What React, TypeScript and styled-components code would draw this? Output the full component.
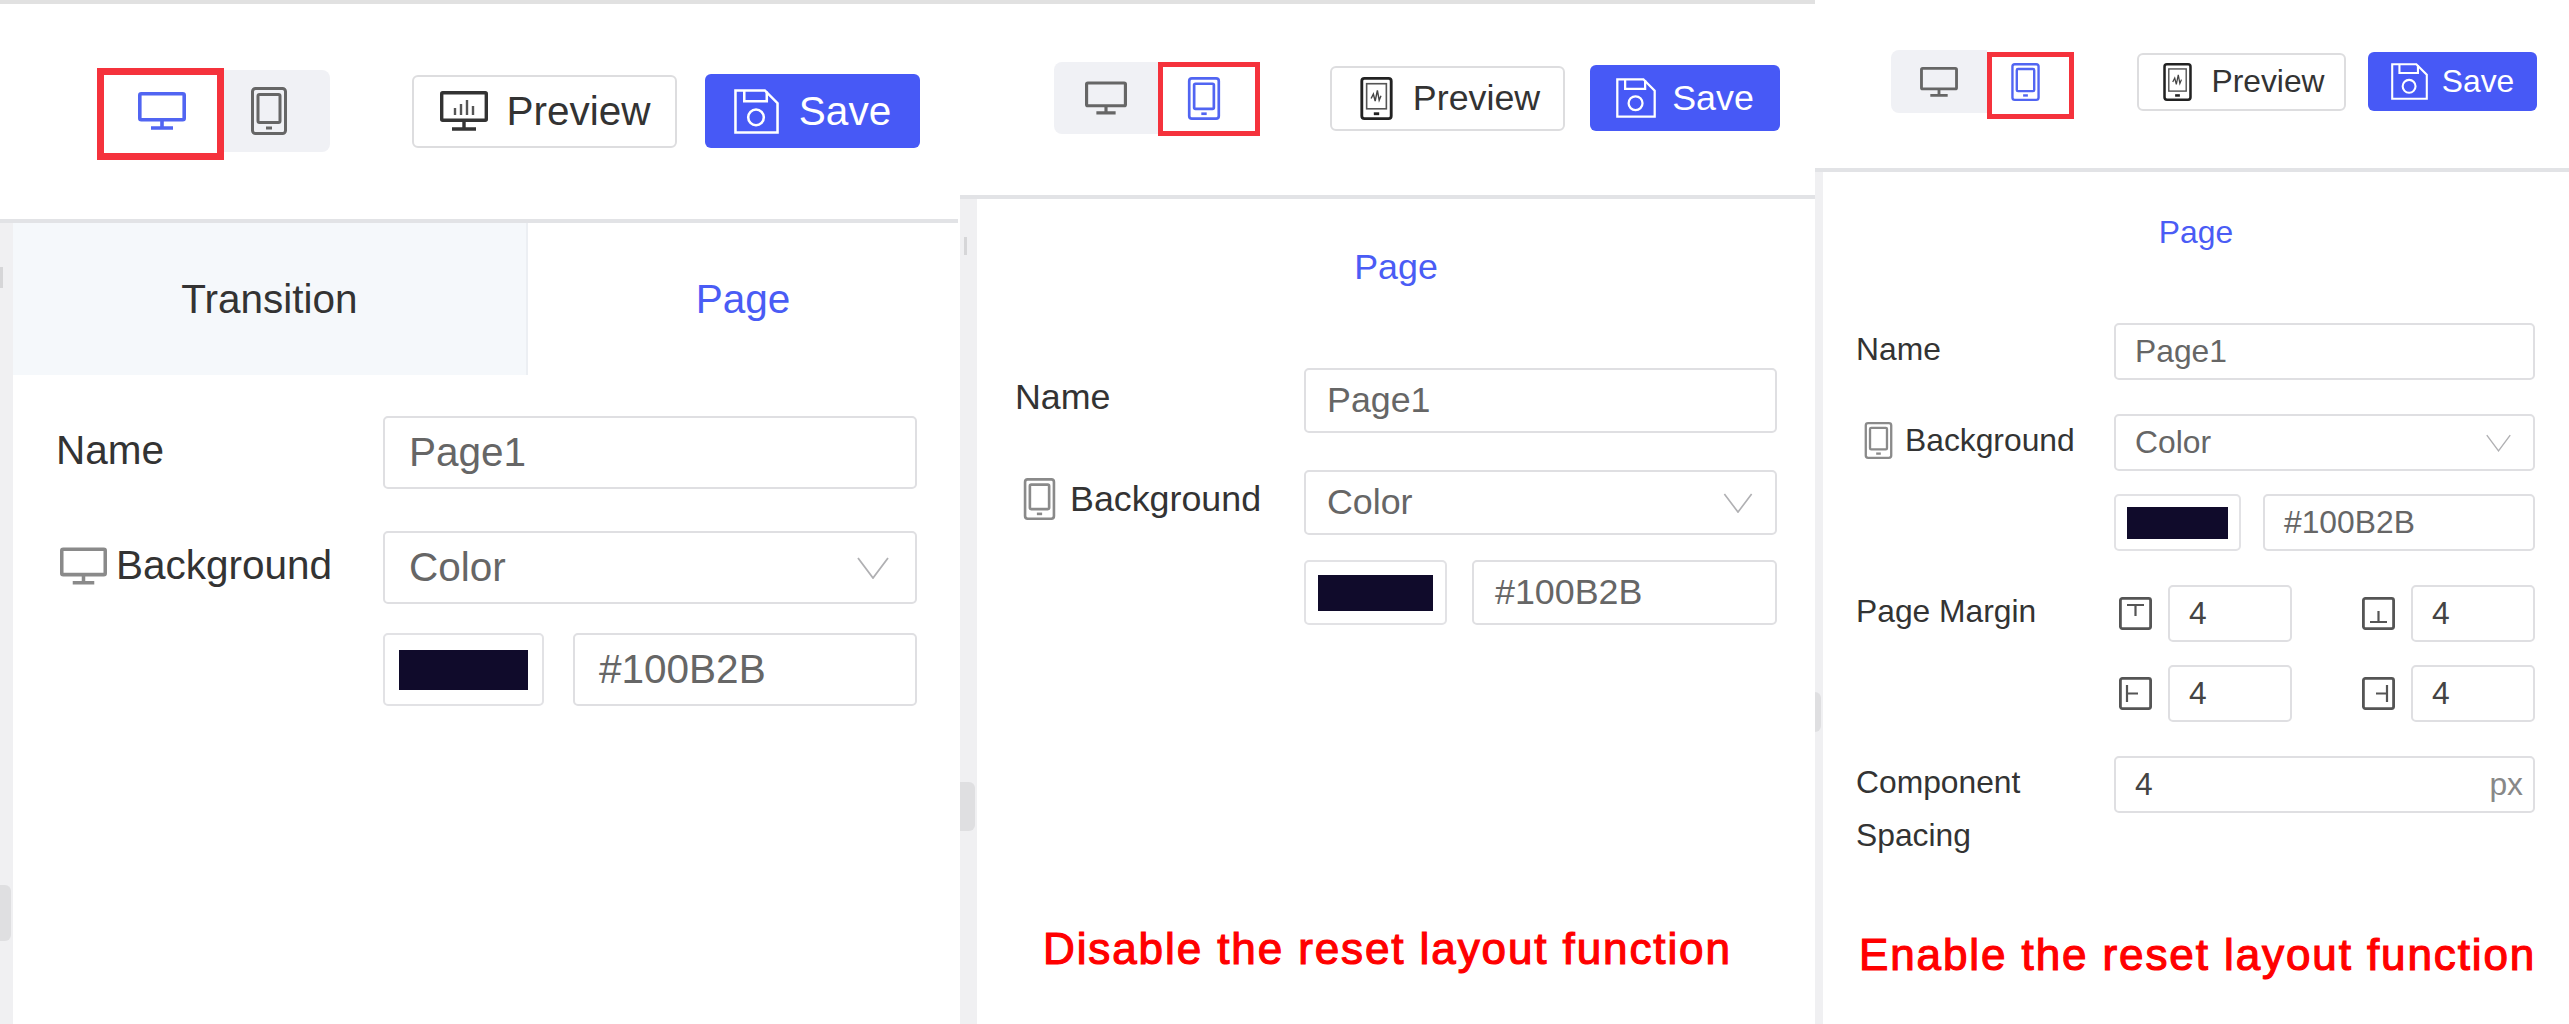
import React from 'react';
import styled, { createGlobalStyle } from 'styled-components';

const BLUE = '#4a5cf5';
const LINE = '#e2e3e6';
const RAIL = '#f0f0f2';

const GlobalStyle = createGlobalStyle`
	html, body {
		margin: 0;
		background: #fff;
		font-family: "Liberation Sans", Arial, sans-serif;
	}
`;

type Metrics = {
	width: number;
	shift: number;
	fs: number;
	toolbarH: number;
	toolbarTop: number;
	toolbarLeft: number;
	topLine: number;
	groupH: number;
	deskW: number;
	phoneW: number;
	phonePad: number;
	deskIcon: [number, number];
	phoneIcon: [number, number];
	groupGap: number;
	previewW: number;
	previewH: number;
	previewPad: number;
	previewIcon: [number, number];
	previewGap: number;
	actionGap: number;
	saveW: number;
	saveIcon: [number, number];
	saveGap: number;
	redInset: string;
	redBorder: number;
	railW: number;
	thumbTop: number;
	thumbH: number;
	grip?: { top: number; left: number; height: number };
	tabH: number;
	bodyTop: number;
	bodyLeft: number;
	bodyRight: number;
	labelW: number;
	labelLh: number;
	ctlH: number;
	rowGap: number;
	subGap: number;
	ctlPad: number;
	swatchW: number;
	swatchGap: number;
	chip: [number, number];
	chevron: [number, number];
	chevronRight: number;
	labelIcon: [number, number];
	labelIconLeft: number;
	labelIconGap: number;
};

const Shot = styled.div`
	display: flex;
	width: 2569px;
	height: 1024px;
	overflow: hidden;
	background: #fff;
`;

const Panel = styled.section<{ $m: Metrics }>`
	flex: none;
	display: flex;
	flex-direction: column;
	width: ${p => p.$m.width}px;
	height: 1024px;
	font-size: ${p => p.$m.fs}px;
	color: #333;
`;

const Toolbar = styled.header<{ $m: Metrics }>`
	flex: none;
	box-sizing: border-box;
	display: flex;
	height: ${p => p.$m.toolbarH}px;
	padding: ${p => p.$m.toolbarTop}px 0 0 ${p => p.$m.toolbarLeft}px;
	border-top: ${p => p.$m.topLine}px solid #e1e1e1;
`;

const ToolbarRow = styled.div<{ $m: Metrics }>`
	display: flex;
	align-items: center;
	height: ${p => p.$m.groupH}px;
`;

const ViewGroup = styled.div<{ $m: Metrics }>`
	display: flex;
	height: ${p => p.$m.groupH}px;
	margin-right: ${p => p.$m.groupGap}px;
	background: #f0f1f5;
	border-radius: 8px;
`;

const ViewItem = styled.div<{ $width: number; $active?: boolean; $padRight?: number }>`
	position: relative;
	box-sizing: border-box;
	display: flex;
	align-items: center;
	justify-content: center;
	width: ${p => p.$width}px;
	padding-right: ${p => p.$padRight ?? 0}px;
	background: ${p => (p.$active ? '#fff' : 'transparent')};
	color: ${p => (p.$active ? '#5165f2' : '#666')};
`;

const RedFrame = styled.span<{ $inset: string; $border: number }>`
	position: absolute;
	inset: ${p => p.$inset};
	border: ${p => p.$border}px solid #f5323c;
	pointer-events: none;
`;

const Preview = styled.button<{ $m: Metrics }>`
	box-sizing: border-box;
	display: flex;
	align-items: center;
	justify-content: center;
	gap: ${p => p.$m.previewGap}px;
	width: ${p => p.$m.previewW}px;
	height: ${p => p.$m.previewH}px;
	margin-right: ${p => p.$m.actionGap}px;
	padding: 0 0 0 ${p => p.$m.previewPad}px;
	background: #fff;
	border: 2px solid #dddddf;
	border-radius: 6px;
	font: inherit;
	color: #333;
`;

const Save = styled.button<{ $m: Metrics }>`
	box-sizing: border-box;
	display: flex;
	align-items: center;
	justify-content: center;
	gap: ${p => p.$m.saveGap}px;
	width: ${p => p.$m.saveW}px;
	height: ${p => p.$m.previewH + 1}px;
	padding: 0;
	background: #4759f6;
	border: 0;
	border-radius: 6px;
	font: inherit;
	color: #fff;
`;

const Workspace = styled.div<{ $m: Metrics }>`
	flex: 1;
	display: flex;
	min-height: 0;
	margin-left: ${p => p.$m.shift}px;
	border-top: 4px solid ${LINE};
`;

const Rail = styled.div<{ $m: Metrics }>`
	position: relative;
	flex: none;
	width: ${p => p.$m.railW}px;
	background: ${RAIL};
`;

const Thumb = styled.span<{ $top: number; $height: number }>`
	position: absolute;
	top: ${p => p.$top}px;
	left: 0;
	right: 2px;
	height: ${p => p.$height}px;
	background: #dfdfe1;
	border-radius: 0 6px 6px 0;
`;

const Grip = styled.span<{ $top: number; $left: number; $height: number }>`
	position: absolute;
	top: ${p => p.$top}px;
	left: ${p => p.$left}px;
	width: 3px;
	height: ${p => p.$height}px;
	background: #d6d6d8;
`;

const Content = styled.div`
	flex: 1;
	min-width: 0;
	display: flex;
	flex-direction: column;
`;

const Tabs = styled.div<{ $m: Metrics }>`
	flex: none;
	display: flex;
	height: ${p => p.$m.tabH}px;
`;

const Tab = styled.div<{ $active?: boolean; $grow: number }>`
	flex: ${p => p.$grow} 0 0;
	display: flex;
	align-items: center;
	justify-content: center;
	color: ${p => (p.$active ? BLUE : '#333')};
	background: ${p => (p.$active ? '#fff' : '#f5f8fb')};
	border-right: ${p => (p.$active ? 0 : `2px solid #eceff3`)};
`;

const Form = styled.div<{ $m: Metrics }>`
	display: grid;
	grid-template-columns: ${p => p.$m.labelW}px 1fr;
	row-gap: ${p => p.$m.rowGap}px;
	padding: ${p => p.$m.bodyTop}px ${p => p.$m.bodyRight}px 0 ${p => p.$m.bodyLeft}px;
`;

const Label = styled.div<{ $m: Metrics }>`
	display: flex;
	align-items: flex-start;
	line-height: ${p => p.$m.labelLh}px;
`;

const IconSlot = styled.span<{ $m: Metrics }>`
	display: flex;
	align-items: center;
	height: ${p => p.$m.labelLh}px;
	margin: 0 ${p => p.$m.labelIconGap}px 0 ${p => p.$m.labelIconLeft}px;
	color: #8a8a8a;
`;

const Stack = styled.div<{ $m: Metrics }>`
	display: flex;
	flex-direction: column;
	gap: ${p => p.$m.subGap}px;
`;

const Control = styled.div<{ $m: Metrics; $grow?: boolean }>`
	box-sizing: border-box;
	display: flex;
	align-items: center;
	justify-content: space-between;
	flex: ${p => (p.$grow ? 1 : 'none')};
	min-width: 0;
	height: ${p => p.$m.ctlH}px;
	padding: 0 ${p => p.$m.chevronRight}px 0 ${p => p.$m.ctlPad}px;
	border: 2px solid #dfdfe2;
	border-radius: 5px;
	color: #666;
	background: #fff;
`;

const ColorRow = styled.div<{ $m: Metrics }>`
	display: flex;
	gap: ${p => p.$m.swatchGap}px;
`;

const SwatchBox = styled.div<{ $m: Metrics }>`
	box-sizing: border-box;
	flex: none;
	display: flex;
	align-items: center;
	justify-content: center;
	width: ${p => p.$m.swatchW}px;
	height: ${p => p.$m.ctlH}px;
	border: 2px solid #e2e2e5;
	border-radius: 5px;
`;

const Chip = styled.span<{ $m: Metrics }>`
	width: ${p => p.$m.chip[0]}px;
	height: ${p => p.$m.chip[1]}px;
	background: #100b2b;
`;

const MarginGrid = styled.div`
	display: grid;
	grid-template-columns: 1fr 1fr;
	gap: 23px 65px;
`;

const MarginCell = styled.div`
	display: flex;
	align-items: center;
	gap: 16px;
	padding-left: 5px;
`;

const ValueControl = styled(Control)`
	color: #444;
`;

const MarginInput = styled(ValueControl)`
	padding-left: 19px;
`;

const Unit = styled.span`
	margin-right: -12px;
	color: #888;
`;

const Note = styled.p<{ $top: number; $left: number }>`
	margin: ${p => p.$top}px 0 0 ${p => p.$left}px;
	font-size: 44px;
	line-height: 60px;
	letter-spacing: 1.9px;
	color: #f00;
	-webkit-text-stroke: 1.2px #f00;
	white-space: nowrap;
`;

type IconProps = { w: number; h: number };

const Desktop = ({ w, h }: IconProps) => (
	<svg width={w} height={h} viewBox="0 0 48 38" fill="none" stroke="currentColor" strokeWidth="3.6">
		<rect x="1.8" y="1.8" width="44.4" height="26" rx="1.5" />
		<path d="M24 28v7M13 36h22" />
	</svg>
);

const Phone = ({ w, h }: IconProps) => (
	<svg width={w} height={h} viewBox="0 0 36 48" fill="none" stroke="currentColor" strokeWidth="3">
		<rect x="1.5" y="1.5" width="33" height="45" rx="3" />
		<rect x="7" y="7.5" width="22" height="28" rx="1.5" />
		<path d="M15 41h6" strokeWidth="3" />
	</svg>
);

const DesktopChart = ({ w, h }: IconProps) => (
	<svg width={w} height={h} viewBox="0 0 48 40" fill="none" stroke="#333" strokeWidth="3.4">
		<rect x="1.7" y="1.7" width="44.6" height="27.6" rx="1" />
		<path d="M24 30v7M12 38h24" />
		<path d="M15 24v-7M21 24v-11M27 24v-15M33 24v-9" strokeWidth="2.4" stroke="#555" />
	</svg>
);

const PhoneChart = ({ w, h }: IconProps) => (
	<svg width={w} height={h} viewBox="0 0 36 48" fill="none" stroke="#222" strokeWidth="3.2">
		<rect x="1.6" y="1.6" width="32.8" height="44.8" rx="3" />
		<rect x="7" y="7.5" width="22" height="28" strokeWidth="1.8" stroke="#555" />
		<path d="M12 24l2.5-5 2 8 2.5-12 2 11 2-5" strokeWidth="1.6" stroke="#444" />
		<path d="M15 41h6" />
	</svg>
);

const Floppy = ({ w, h }: IconProps) => (
	<svg width={w} height={h} viewBox="0 0 46 46" fill="none" stroke="#fff" strokeWidth="2.6">
		<path d="M1.5 1.5h30l13 13v30h-43z" />
		<path d="M10.5 1.5v11h23v-10" />
		<circle cx="22.5" cy="29" r="8" />
	</svg>
);

const Chevron = ({ w, h }: IconProps) => (
	<svg width={w} height={h} viewBox="0 0 32 22" fill="none" stroke="#b0b0b3" strokeWidth="1.8">
		<path d="M1 1l15 20 15-20" />
	</svg>
);

const marginBars = {
	top: 'M8 8h17M16.5 8v11',
	bottom: 'M8 25h17M16.5 25v-11',
	left: 'M8 8v17M8 16.5h11',
	right: 'M25 8v17M25 16.5h-11',
};

const MarginIcon = ({ side }: { side: keyof typeof marginBars }) => (
	<svg width="33" height="33" viewBox="0 0 33 33" fill="none" stroke="#555" strokeWidth="2.8">
		<rect x="1.4" y="1.4" width="30.2" height="30.2" rx="2" />
		<path d={marginBars[side]} strokeWidth="2.2" />
	</svg>
);

const desktopPanel: Metrics = {
	width: 958, shift: 0, fs: 40.5, toolbarH: 219, toolbarTop: 66, toolbarLeft: 100, topLine: 4, groupH: 82,
	deskW: 124, phoneW: 106, phonePad: 16, deskIcon: [48, 38], phoneIcon: [36, 48], groupGap: 82,
	previewW: 265, previewH: 73, previewPad: 2, previewIcon: [48, 40], previewGap: 18, actionGap: 28, saveW: 215, saveIcon: [45, 45], saveGap: 20,
	redInset: '-2px 0 -8px -3px', redBorder: 7, railW: 13, thumbTop: 662, thumbH: 56, grip: { top: 44, left: 0, height: 21 },
	tabH: 152, bodyTop: 41, bodyLeft: 43, bodyRight: 41, labelW: 327, labelLh: 69, ctlH: 73, rowGap: 42, subGap: 29,
	ctlPad: 24, swatchW: 161, swatchGap: 29, chip: [129, 40], chevron: [32, 22], chevronRight: 26,
	labelIcon: [47, 38], labelIconLeft: 4, labelIconGap: 9,
};

const tabletPanel: Metrics = {
	width: 857, shift: 2, fs: 35.8, toolbarH: 195, toolbarTop: 58, toolbarLeft: 96, topLine: 4, groupH: 72,
	deskW: 104, phoneW: 102, phonePad: 10, deskIcon: [42, 34], phoneIcon: [34, 43], groupGap: 70,
	previewW: 235, previewH: 65, previewPad: 5, previewIcon: [33, 43], previewGap: 20, actionGap: 25, saveW: 190, saveIcon: [40, 40], saveGap: 16,
	redInset: '0 0 -2px 0', redBorder: 5, railW: 17, thumbTop: 583, thumbH: 49, grip: { top: 38, left: 4, height: 18 },
	tabH: 136, bodyTop: 33, bodyLeft: 38, bodyRight: 38, labelW: 289, labelLh: 58, ctlH: 65, rowGap: 37, subGap: 25,
	ctlPad: 21, swatchW: 143, swatchGap: 25, chip: [115, 36], chevron: [30, 20], chevronRight: 22,
	labelIcon: [33, 42], labelIconLeft: 8, labelIconGap: 14,
};

const mobilePanel: Metrics = {
	width: 754, shift: 0, fs: 31.8, toolbarH: 168, toolbarTop: 50, toolbarLeft: 76, topLine: 0, groupH: 63,
	deskW: 96, phoneW: 87, phonePad: 11, deskIcon: [38, 30], phoneIcon: [29, 38], groupGap: 63,
	previewW: 209, previewH: 58, previewPad: 5, previewIcon: [29, 38], previewGap: 19, actionGap: 22, saveW: 169, saveIcon: [37, 37], saveGap: 14,
	redInset: '2px 0 -6px 0', redBorder: 5, railW: 8, thumbTop: 520, thumbH: 40,
	tabH: 120, bodyTop: 31, bodyLeft: 33, bodyRight: 34, labelW: 258, labelLh: 53, ctlH: 57, rowGap: 34, subGap: 23,
	ctlPad: 19, swatchW: 127, swatchGap: 22, chip: [101, 32], chevron: [25, 18], chevronRight: 22,
	labelIcon: [29, 37], labelIconLeft: 8, labelIconGap: 12,
};

type SettingsProps = {
	m: Metrics;
	device: 'desktop' | 'phone';
	showTransition?: boolean;
	note?: { text: string; top: number; left: number };
	children?: React.ReactNode;
};

const SettingsPanel = ({ m, device, showTransition, note, children }: SettingsProps) => {
	const frame = <RedFrame $inset={m.redInset} $border={m.redBorder} />;
	const isDesktop = device === 'desktop';
	return (
		<Panel $m={m}>
			<Toolbar $m={m}>
				<ToolbarRow $m={m}>
					<ViewGroup $m={m}>
						<ViewItem $width={m.deskW} $active={isDesktop}>
							<Desktop w={m.deskIcon[0]} h={m.deskIcon[1]} />
							{isDesktop && frame}
						</ViewItem>
						<ViewItem $width={m.phoneW} $active={!isDesktop} $padRight={m.phonePad}>
							<Phone w={m.phoneIcon[0]} h={m.phoneIcon[1]} />
							{!isDesktop && frame}
						</ViewItem>
					</ViewGroup>
					<Preview $m={m}>
						{isDesktop
							? <DesktopChart w={m.previewIcon[0]} h={m.previewIcon[1]} />
							: <PhoneChart w={m.previewIcon[0]} h={m.previewIcon[1]} />}
						Preview
					</Preview>
					<Save $m={m}>
						<Floppy w={m.saveIcon[0]} h={m.saveIcon[1]} />
						Save
					</Save>
				</ToolbarRow>
			</Toolbar>
			<Workspace $m={m}>
				<Rail $m={m}>
					{m.grip && <Grip $top={m.grip.top} $left={m.grip.left} $height={m.grip.height} />}
					<Thumb $top={m.thumbTop} $height={m.thumbH} />
				</Rail>
				<Content>
					<Tabs $m={m}>
						{showTransition && <Tab $grow={514}>Transition</Tab>}
						<Tab $active $grow={431}>Page</Tab>
					</Tabs>
					<Form $m={m}>
						<Label $m={m}>Name</Label>
						<Control $m={m}>Page1</Control>
						<Label $m={m}>
							<IconSlot $m={m}>
								{isDesktop
									? <Desktop w={m.labelIcon[0]} h={m.labelIcon[1]} />
									: <Phone w={m.labelIcon[0]} h={m.labelIcon[1]} />}
							</IconSlot>
							Background
						</Label>
						<Stack $m={m}>
							<Control $m={m}>
								Color
								<Chevron w={m.chevron[0]} h={m.chevron[1]} />
							</Control>
							<ColorRow $m={m}>
								<SwatchBox $m={m}><Chip $m={m} /></SwatchBox>
								<Control $m={m} $grow>#100B2B</Control>
							</ColorRow>
						</Stack>
						{children}
					</Form>
					{note && <Note $top={note.top} $left={note.left}>{note.text}</Note>}
				</Content>
			</Workspace>
		</Panel>
	);
};

const App = () => {
	const m = mobilePanel;
	return (
		<Shot>
			<GlobalStyle />
			<SettingsPanel m={desktopPanel} device="desktop" showTransition />
			<SettingsPanel
				m={tabletPanel}
				device="phone"
				note={{ text: 'Disable the reset layout function', top: 294, left: 66 }}
			/>
			<SettingsPanel
				m={mobilePanel}
				device="phone"
				note={{ text: 'Enable the reset layout function', top: 63, left: 36 }}
			>
				<Label $m={m}>Page Margin</Label>
				<MarginGrid>
					{(['top', 'bottom', 'left', 'right'] as const).map(side => (
						<MarginCell key={side}>
							<MarginIcon side={side} />
							<MarginInput $m={m} $grow>4</MarginInput>
						</MarginCell>
					))}
				</MarginGrid>
				<Label $m={m}>Component<br />Spacing</Label>
				<ValueControl $m={m}>
					4
					<Unit>px</Unit>
				</ValueControl>
			</SettingsPanel>
		</Shot>
	);
};

export default App;
